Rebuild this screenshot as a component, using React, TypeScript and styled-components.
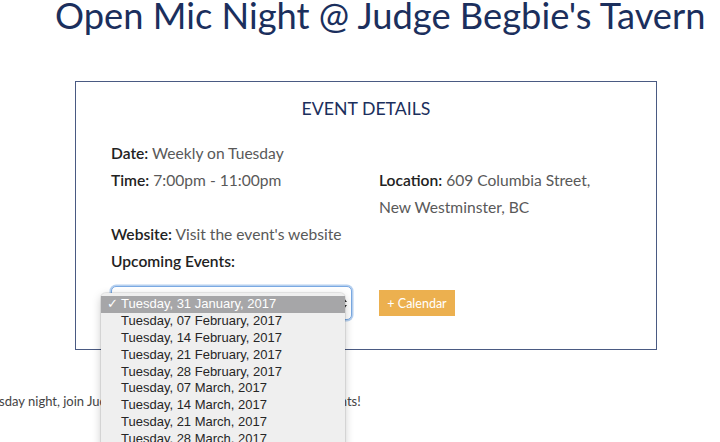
import styled, { createGlobalStyle } from 'styled-components';

const GlobalStyle = createGlobalStyle`
	html,
	body {
		margin: 0;
		padding: 0;
		background: #ffffff;
		overflow: hidden;
	}

	body {
		font-family: Lato, 'Open Sans', sans-serif;
	}
`;

const Page = styled.div`
	width: 720px;
	height: 442px;
	overflow: hidden;
	display: flex;
	flex-direction: column;
`;

const Title = styled.h1`
	margin: -2px 0 0;
	padding-left: 55px;
	font-size: 36.3px;
	line-height: 35px;
	font-weight: 400;
	color: #1b2f5d;
	white-space: nowrap;
`;

const DetailsBox = styled.section`
	box-sizing: border-box;
	width: 582px;
	height: 269px;
	margin: 48px 0 0 75px;
	padding: 15px 0 0 35px;
	border: 1px solid #4a5a82;
	display: flex;
	flex-direction: column;
`;

const BoxHeading = styled.h2`
	margin: 0 0 19px -35px;
	font-size: 17.7px;
	line-height: 24px;
	font-weight: 400;
	text-align: center;
	text-transform: uppercase;
	color: #1b2f5d;
`;

const Line = styled.div`
	font-size: 15.6px;
	line-height: 27px;
	color: #595959;
`;

const Label = styled.span`
	font-weight: 600;
	color: #222;
`;

const Columns = styled.div`
	display: grid;
	grid-template-columns: 268px 236px;
`;

const ActionRow = styled.div`
	display: grid;
	grid-template-columns: 268px auto;
	align-items: center;
	margin-top: 11px;
`;

const SelectWrap = styled.div`
	position: relative;
	width: 241px;
	height: 34px;
`;

const SelectBox = styled.div`
	box-sizing: border-box;
	width: 100%;
	height: 100%;
	border: 1px solid #7aa9e2;
	border-radius: 5px;
	box-shadow: 0 0 0 1.5px rgba(122, 169, 226, 0.55);
	background: #ffffff;
	display: flex;
	align-items: center;
	justify-content: flex-end;
	padding-right: 4px;
`;

const Popup = styled.ul`
	position: absolute;
	left: -10px;
	top: 7px;
	z-index: 2;
	width: 244px;
	margin: 0;
	padding: 3px 0;
	list-style: none;
	background: #efefef;
	border-radius: 5px;
	box-shadow: 0 0 0 1px rgba(0, 0, 0, 0.08), 0 3px 10px rgba(0, 0, 0, 0.22);
`;

const Option = styled.li<{ $selected?: boolean }>`
	position: relative;
	height: 16.9px;
	padding-left: 20px;
	font-family: 'Liberation Sans', Arial, sans-serif;
	font-size: 13px;
	line-height: 16.9px;
	color: ${(p) => (p.$selected ? '#ffffff' : '#262626')};
	background: ${(p) => (p.$selected ? '#a6a6a8' : 'transparent')};
	white-space: nowrap;
`;

const Check = styled.span`
	position: absolute;
	left: 6px;
	top: 0;
`;

const CalendarButton = styled.button`
	box-sizing: border-box;
	width: 76px;
	height: 26px;
	padding: 0;
	border: none;
	background: #ecb04f;
	color: #ffffff;
	font-family: Lato, sans-serif;
	font-size: 12.5px;
	cursor: pointer;
`;

const Blurb = styled.p`
	margin: 41px 0 0 -56px;
	font-size: 13px;
	line-height: 20px;
	color: #444;
	white-space: nowrap;
`;

const dates = [
	'Tuesday, 31 January, 2017',
	'Tuesday, 07 February, 2017',
	'Tuesday, 14 February, 2017',
	'Tuesday, 21 February, 2017',
	'Tuesday, 28 February, 2017',
	'Tuesday, 07 March, 2017',
	'Tuesday, 14 March, 2017',
	'Tuesday, 21 March, 2017',
	'Tuesday, 28 March, 2017',
	'Tuesday, 04 April, 2017',
	'Tuesday, 11 April, 2017',
];

const SelectArrows = () => (
	<svg width="6" height="11" viewBox="0 0 6 11">
		<path d="M3 0 L6 4 L0 4 Z" fill="#333" />
		<path d="M3 11 L6 7 L0 7 Z" fill="#333" />
	</svg>
);

const App = () => {
	return (
		<Page>
			<GlobalStyle />
			<Title>Open Mic Night @ Judge Begbie's Tavern</Title>

			<DetailsBox>
				<BoxHeading>Event Details</BoxHeading>

				<Line>
					<Label>Date:</Label> Weekly on Tuesday
				</Line>

				<Columns>
					<Line>
						<Label>Time:</Label> 7:00pm - 11:00pm
					</Line>
					<Line>
						<Label>Location:</Label> 609 Columbia Street, New Westminster, BC
					</Line>
				</Columns>

				<Line>
					<Label>Website:</Label> Visit the event's website
				</Line>
				<Line>
					<Label>Upcoming Events:</Label>
				</Line>

				<ActionRow>
					<SelectWrap>
						<SelectBox>
							<SelectArrows />
						</SelectBox>
						<Popup>
							{dates.map((d, i) => (
								<Option key={d} $selected={i === 0}>
									{i === 0 && <Check>✓</Check>}
									{d}
								</Option>
							))}
						</Popup>
					</SelectWrap>
					<CalendarButton>+ Calendar</CalendarButton>
				</ActionRow>
			</DetailsBox>

			<Blurb>Every Tuesday night, join Judge Begbie's Tavern for their open mic events!</Blurb>
		</Page>
	);
};

export default App;
